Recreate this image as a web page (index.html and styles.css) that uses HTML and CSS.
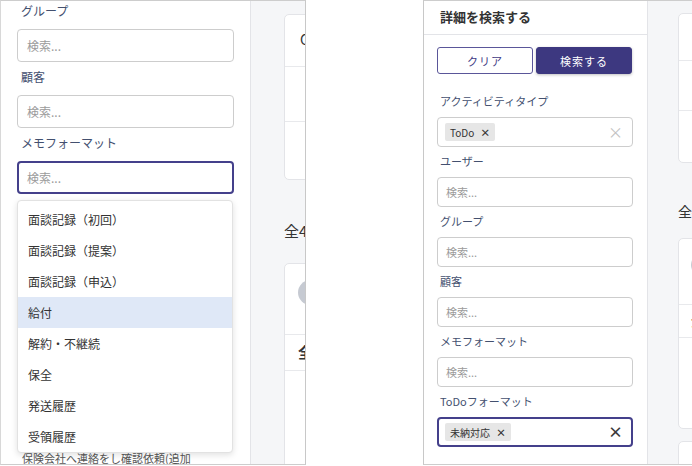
FILE: index.html
```html
<!DOCTYPE html>
<html lang="ja">
<head>
<meta charset="utf-8">
<title>詳細を検索する</title>
<link rel="stylesheet" href="styles.css">
</head>
<body>
<div class="stage">
  <!-- left screenshot: scrolled sidebar with dropdown open -->
  <section class="shot shot-a">
    <aside class="side side-a">
      <div class="field">
        <div class="lbl">グループ</div>
        <div class="inp"><span class="ph">検索...</span></div>
      </div>
      <div class="field">
        <div class="lbl">顧客</div>
        <div class="inp"><span class="ph">検索...</span></div>
      </div>
      <div class="field">
        <div class="lbl">メモフォーマット</div>
        <div class="inp inp-focus"><span class="ph">検索...</span></div>
      </div>
      <p class="under">保険会社へ連絡をし確認依頼(追加<br>当社担当より回答を確認する</p>
      <ul class="menu">
        <li>面談記録（初回）</li>
        <li>面談記録（提案）</li>
        <li>面談記録（申込）</li>
        <li class="hl">給付</li>
        <li>解約・不継続</li>
        <li>保全</li>
        <li>発送履歴</li>
        <li>受領履歴</li>
      </ul>
    </aside>
    <main class="main main-a">
      <div class="card card-a1">
        <div class="row r1">Chart</div>
        <div class="row r2"></div>
        <div class="row r3"></div>
      </div>
      <div class="count">全4件</div>
      <div class="card card-a2">
        <div class="row r4"><span class="avatar"></span></div>
        <div class="row r5">全体</div>
        <div class="row r6"></div>
      </div>
    </main>
  </section>

  <!-- right screenshot: full search panel -->
  <section class="shot shot-b">
    <aside class="side side-b">
      <header class="head">詳細を検索する</header>
      <div class="body">
        <div class="btns">
          <button class="btn btn-line">クリア</button>
          <button class="btn btn-fill">検索する</button>
        </div>
        <div class="field first">
          <div class="lbl">アクティビティタイプ</div>
          <div class="inp multi">
            <span class="chip">ToDo<span class="chip-x">×</span></span>
            <span class="clear">×</span>
          </div>
        </div>
        <div class="field">
          <div class="lbl">ユーザー</div>
          <div class="inp"><span class="ph">検索...</span></div>
        </div>
        <div class="field">
          <div class="lbl">グループ</div>
          <div class="inp"><span class="ph">検索...</span></div>
        </div>
        <div class="field">
          <div class="lbl">顧客</div>
          <div class="inp"><span class="ph">検索...</span></div>
        </div>
        <div class="field">
          <div class="lbl">メモフォーマット</div>
          <div class="inp"><span class="ph">検索...</span></div>
        </div>
        <div class="field">
          <div class="lbl">ToDoフォーマット</div>
          <div class="inp multi inp-focus">
            <span class="chip">未納対応<span class="chip-x">×</span></span>
            <span class="clear dark">×</span>
          </div>
        </div>
      </div>
    </aside>
    <main class="main main-b">
      <div class="card card-b1">
        <div class="row s1">Chart</div>
        <div class="row s2"></div>
        <div class="row s3"></div>
      </div>
      <div class="count">全4件</div>
      <div class="card card-b2">
        <div class="row s4"><span class="avatar"></span></div>
        <div class="row s5">全体</div>
        <div class="row s6"></div>
      </div>
      <div class="card card-b3"></div>
    </main>
  </section>
</div>
</body>
</html>
```

FILE: styles.css
```css
* { box-sizing: border-box; }

html, body {
  margin: 0;
  padding: 0;
  background: #ffffff;
}

body {
  width: 692px;
  height: 466px;
  overflow: hidden;
  font-family: "Noto Sans CJK JP", "Noto Sans", sans-serif;
  color: #333;
}

.stage {
  display: flex;
  gap: 117px;
  align-items: flex-start;
}

.shot {
  display: flex;
  height: 465px;
  overflow: hidden;
  border-top: 1px solid #cdcdcd;
  border-bottom: 1px solid #cdcdcd;
  background: #f5f6f8;
}

.shot-a {
  width: 306px;
  border-left: 1px solid #d8d8d8;
  border-right: 1px solid #c8c8c8;
}

.shot-b {
  width: 269px;
  border-left: 1px solid #c8c8c8;
}

/* ---------- sidebars ---------- */
.side {
  position: relative;
  flex: none;
  background: #fff;
  border-right: 1px solid #e3e4e8;
}

.side-a {
  width: 250px;
  padding: 0 16px;
  overflow: hidden;
}

.side-b {
  width: 224px;
}

.lbl {
  color: #43506f;
}

.inp {
  position: relative;
  display: flex;
  align-items: center;
  background: #fff;
  border: 1px solid #cdcdcd;
  border-radius: 4px;
}

.ph {
  color: #9b9b9b;
}

.inp-focus {
  border: 2px solid #44408b;
}

/* left (zoomed) variant */
.side-a .field { margin-bottom: 5px; }
.side-a .lbl {
  font-size: 12px;
  line-height: 20px;
  height: 20px;
  padding-left: 4px;
  margin-bottom: 8px;
}
.side-a .inp {
  height: 33px;
  padding-left: 9px;
  font-size: 12px;
}
.side-a .inp-focus { padding-left: 8px; }

.under {
  margin: 257px 0 0;
  padding-left: 5px;
  font-size: 11px;
  line-height: 14px;
  color: #555;
  white-space: nowrap;
}

.menu {
  position: absolute;
  left: 16px;
  top: 199px;
  width: 216px;
  margin: 0;
  padding: 3px 0 0;
  list-style: none;
  background: #fff;
  border: 1px solid #e2e2e2;
  border-radius: 4px;
  box-shadow: 0 2px 6px rgba(0, 0, 0, 0.12);
}

.menu li {
  height: 31px;
  line-height: 31px;
  padding-left: 10px;
  font-size: 12px;
  color: #333;
}

.menu li.hl {
  background: #dfe8f7;
}

/* right variant */
.head {
  height: 34px;
  padding-left: 16px;
  line-height: 32px;
  font-size: 13px;
  font-weight: 700;
  color: #333;
  border-bottom: 1px solid #e3e4e8;
}

.body {
  padding: 12px 14px 0 13px;
}

.btns {
  display: flex;
  gap: 3px;
}

.btn {
  width: 96px;
  height: 27px;
  border-radius: 3px;
  font-family: inherit;
  font-size: 11px;
  letter-spacing: 1px;
  padding: 0;
  cursor: pointer;
}

.btn-line {
  background: #fff;
  color: #3f3a84;
  border: 1px solid #5a5699;
}

.btn-fill {
  background: #3d3880;
  color: #fff;
  border: 1px solid #3d3880;
  box-shadow: 0 1px 3px rgba(0, 0, 0, 0.25);
}

.side-b .field { margin-bottom: 5px; }
.side-b .field.first { margin-top: 18px; }
.side-b .lbl {
  font-size: 11px;
  line-height: 18px;
  height: 18px;
  padding-left: 3px;
  margin-bottom: 7px;
}
.side-b .inp {
  height: 30px;
  padding-left: 8px;
  font-size: 11px;
}
.side-b .multi { padding-left: 7px; }
.side-b .multi.inp-focus { padding-left: 6px; }

.chip {
  display: inline-flex;
  align-items: center;
  height: 18px;
  padding: 0 5px 0 5px;
  gap: 6px;
  background: #e6e6e6;
  border-radius: 2px;
  font-size: 10px;
  color: #333;
}

.chip-x {
  font-size: 10px;
  font-weight: 700;
  color: #333;
}

.clear {
  position: absolute;
  right: 9px;
  top: 50%;
  transform: translateY(-52%);
  font-size: 15px;
  line-height: 1;
  color: #c2c2c2;
}

.clear.dark {
  right: 8px;
  color: #3a3a3a;
  font-weight: 700;
}

/* ---------- main area ---------- */
.main {
  flex: 1;
  min-width: 0;
  overflow: hidden;
}

.card {
  width: 320px;
  background: #fff;
  border: 1px solid #e3e4e8;
  border-radius: 5px;
}

.row {
  border-bottom: 1px solid #e8e9ec;
  white-space: nowrap;
}
.row:last-child { border-bottom: 0; }

.count {
  color: #333;
  white-space: nowrap;
}

.avatar {
  display: inline-block;
  border-radius: 50%;
  background: #c6cad2;
}

/* left main (zoomed) */
.main-a { padding: 13px 0 0 33px; }
.card-a1 { height: 166px; }
.r1 { height: 52px; line-height: 48px; padding-left: 15px; font-size: 14px; }
.r2 { height: 55px; }
.r3 { height: 57px; }
.main-a .count {
  margin-top: 40px;
  font-size: 15px;
  line-height: 22px;
}
.card-a2 { margin-top: 21px; height: 300px; }
.r4 { height: 71px; padding: 16px 0 0 13px; }
.r4 .avatar { width: 25px; height: 25px; }
.r5 { height: 36px; line-height: 34px; padding-left: 13px; font-size: 15px; font-weight: 700; }
.r6 { height: 100px; }

/* right main */
.main-b { padding: 12px 0 0 30px; }
.card-b1 { height: 150px; }
.s1 { height: 47px; line-height: 44px; padding-left: 14px; font-size: 13px; }
.s2 { height: 50px; }
.s3 { height: 51px; }
.main-b .count {
  margin-top: 38px;
  font-size: 14px;
  line-height: 20px;
}
.card-b2 { margin-top: 17px; height: 191px; }
.s4 { height: 66px; padding: 15px 0 0 12px; }
.s4 .avatar { width: 22px; height: 22px; }
.s5 { height: 33px; line-height: 31px; padding-left: 12px; font-size: 14px; font-weight: 700; }
.s6 { height: 90px; }
.card-b3 { margin-top: 12px; height: 60px; }
```
